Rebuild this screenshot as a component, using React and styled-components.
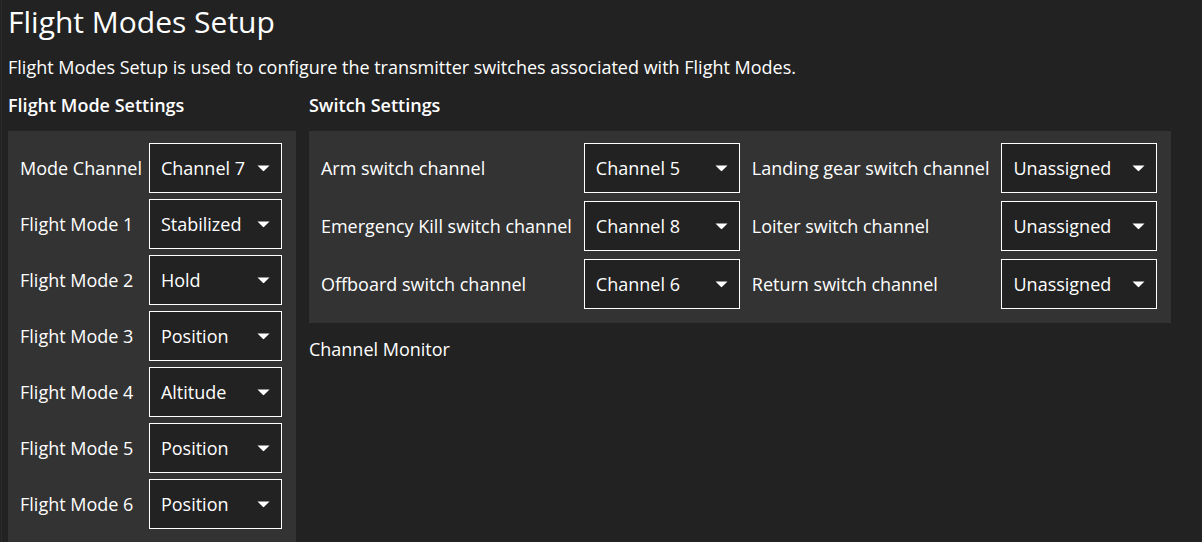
import React from 'react';
import styled, { createGlobalStyle } from 'styled-components';

const GlobalStyle = createGlobalStyle`
  html, body {
    margin: 0;
    padding: 0;
    background: #222222;
    overflow: hidden;
  }
  body {
    font-family: 'Open Sans', 'Noto Sans', sans-serif;
    color: #ffffff;
  }
`;

const Page = styled.div`
  height: 542px;
  padding: 0 8px;
  border-left: 1px solid #2c2c2c;
  margin-left: 1px;
  box-sizing: border-box;
  display: flex;
  flex-direction: column;
`;

const Title = styled.h1`
  font-size: 30px;
  font-weight: 400;
  margin: 2px 0 0;
  margin-left: -2px;
  line-height: 40px;
`;

const Description = styled.p`
  font-size: 18px;
  margin: 12px 0 0;
  margin-left: -2px;
  line-height: 26px;
`;

const Columns = styled.div`
  display: flex;
  gap: 13px;
  margin-top: 12px;
  margin-left: -2px;
  flex: 1;
  min-height: 0;
`;

const Column = styled.div`
  display: flex;
  flex-direction: column;
`;

const SectionTitle = styled.h2`
  font-size: 18px;
  font-weight: 600;
  margin: 0 0 13px;
  line-height: 26px;
`;

const Panel = styled.div`
  background: #333333;
  padding: 12px 14px 14px 12px;
  flex: ${p => (p.$grow ? 1 : 'none')};
  display: grid;
  grid-template-columns: ${p => p.$cols};
  column-gap: ${p => p.$colGap}px;
  row-gap: ${p => p.$rowGap}px;
  align-items: center;
  align-content: start;
`;

const Label = styled.span`
  font-size: 18px;
  line-height: 26px;
  white-space: nowrap;
`;

const SelectBox = styled.div`
  box-sizing: border-box;
  width: ${p => p.$width}px;
  height: 50px;
  border: 1px solid #ffffff;
  background: #222222;
  display: flex;
  align-items: center;
  justify-content: space-between;
  padding: 0 11px;
  font-size: 18px;
`;

const Arrow = () => (
  <svg width="13" height="7" viewBox="0 0 13 7">
    <path d="M0.5 0.5 H12.5 L7.2 5.8 Q6.5 6.5 5.8 5.8 Z" fill="#ffffff" />
  </svg>
);

const Select = ({ value, width }) => (
  <SelectBox $width={width}>
    <span>{value}</span>
    <Arrow />
  </SelectBox>
);

const MonitorTitle = styled.div`
  font-size: 18px;
  line-height: 26px;
  margin-top: 13px;
`;

const modes = [
  ['Mode Channel', 'Channel 7'],
  ['Flight Mode 1', 'Stabilized'],
  ['Flight Mode 2', 'Hold'],
  ['Flight Mode 3', 'Position'],
  ['Flight Mode 4', 'Altitude'],
  ['Flight Mode 5', 'Position'],
  ['Flight Mode 6', 'Position'],
];

const switches = [
  ['Arm switch channel', 'Channel 5', 'Landing gear switch channel', 'Unassigned'],
  ['Emergency Kill switch channel', 'Channel 8', 'Loiter switch channel', 'Unassigned'],
  ['Offboard switch channel', 'Channel 6', 'Return switch channel', 'Unassigned'],
];

export default function App() {
  return (
    <>
      <GlobalStyle />
      <Page>
        <Title>Flight Modes Setup</Title>
        <Description>
          Flight Modes Setup is used to configure the transmitter switches associated with Flight Modes.
        </Description>
        <Columns>
          <Column>
            <SectionTitle>Flight Mode Settings</SectionTitle>
            <Panel $grow $cols="auto 133px" $colGap={7} $rowGap={6}>
              {modes.map(([label, value]) => (
                <React.Fragment key={label}>
                  <Label>{label}</Label>
                  <Select value={value} width={133} />
                </React.Fragment>
              ))}
            </Panel>
          </Column>
          <Column>
            <SectionTitle>Switch Settings</SectionTitle>
            <Panel $cols="auto 156px auto 156px" $colGap={12} $rowGap={8}>
              {switches.map(([l1, v1, l2, v2]) => (
                <React.Fragment key={l1}>
                  <Label>{l1}</Label>
                  <Select value={v1} width={156} />
                  <Label>{l2}</Label>
                  <Select value={v2} width={156} />
                </React.Fragment>
              ))}
            </Panel>
            <MonitorTitle>Channel Monitor</MonitorTitle>
          </Column>
        </Columns>
      </Page>
    </>
  );
}
